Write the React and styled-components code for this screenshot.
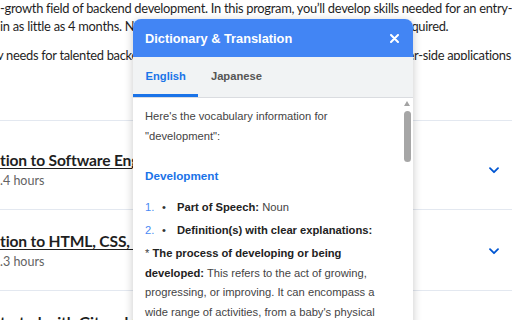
import React from 'react';
import styled, { createGlobalStyle } from 'styled-components';

const Global = createGlobalStyle`
  html, body { margin: 0; padding: 0; background: #fff; }
  body { width: 512px; height: 320px; overflow: hidden; }
`;

const Page = styled.div`
  position: relative;
  width: 512px;
  height: 320px;
  overflow: hidden;
  background: #fff;
  font-family: Lato, "Liberation Sans", sans-serif;
  color: #1f1f1f;
`;

const Para = styled.p`
  margin: ${p => (p.$first ? '-1px 0 0' : '11px 0 0')};
  font-size: 12.9px;
  letter-spacing: -0.29px;
  line-height: 18px;
  white-space: nowrap;
  height: ${p => (p.$clip ? '14px' : 'auto')};
  overflow: hidden;
  text-indent: ${p => p.$indent || '0px'};
`;

const Line = styled.span`
  display: block;
`;

const Modules = styled.div`
  margin-top: 60px;
  padding-top: 8px;
  border-top: 1px solid #e3e8f0;
`;

const Module = styled.div`
  display: flex;
  align-items: center;
  justify-content: space-between;
  padding: 20px 13px 18px 0;
  & + & { border-top: 1px solid #e3e8f0; }
`;

const ModuleText = styled.div`
  display: flex;
  flex-direction: column;
  white-space: nowrap;
`;

const ModuleTitle = styled.span`
  font-size: 15.6px;
  letter-spacing: -0.15px;
  line-height: 22px;
  font-weight: 700;
  text-decoration: underline;
  text-underline-offset: 2px;
  color: #1f1f1f;
`;

const ModuleMeta = styled.span`
  font-size: 12.5px;
  line-height: 20px;
  color: #636363;
`;

const Chevron = () => (
  <svg width="10" height="7" viewBox="0 0 10 7" fill="none">
    <path d="M1 1.2 L5 5.2 L9 1.2" stroke="#0056d2" strokeWidth="1.8" strokeLinecap="round" strokeLinejoin="round" />
  </svg>
);

const Popup = styled.div`
  position: absolute;
  left: 133px;
  top: 19px;
  width: 280px;
  height: 330px;
  display: flex;
  flex-direction: column;
  background: #fff;
  border-radius: 8px 8px 0 0;
  overflow: hidden;
  box-shadow: 0 2px 10px rgba(0, 0, 0, 0.22);
  font-family: "Liberation Sans", Arial, sans-serif;
`;

const Header = styled.div`
  height: 38px;
  flex: none;
  display: flex;
  align-items: center;
  justify-content: space-between;
  padding: 0 14px 0 12px;
  background: #4285f4;
  color: #fff;
`;

const Title = styled.span`
  font-size: 12.8px;
  font-weight: 700;
`;

const CloseIcon = () => (
  <svg width="9" height="9" viewBox="0 0 9 9">
    <path d="M1 1 L8 8 M8 1 L1 8" stroke="#fff" strokeWidth="2" strokeLinecap="round" />
  </svg>
);

const Tabs = styled.div`
  height: 40px;
  flex: none;
  display: flex;
  background: #f1f3f4;
  border-bottom: 1px solid #dadce0;
`;

const Tab = styled.div`
  display: flex;
  align-items: center;
  padding: 1px 12.5px 0;
  font-size: 11.2px;
  font-weight: 700;
  color: ${p => (p.$active ? '#1a73e8' : '#555')};
  border-bottom: 3px solid ${p => (p.$active ? '#1a73e8' : 'transparent')};
`;

const Body = styled.div`
  flex: 1;
  display: flex;
  min-height: 0;
`;

const Content = styled.div`
  flex: 1;
  padding: 9px 12px 0;
  font-size: 11.2px;
  line-height: 19.5px;
  color: #444;
  white-space: nowrap;
`;

const Text = styled.p`
  margin: ${p => p.$mt || '0'} 0 0;
`;

const Heading = styled.h3`
  margin: 20px 0 0;
  font-size: 11.7px;
  line-height: 19.5px;
  font-weight: 700;
  color: #1a73e8;
`;

const List = styled.ol`
  list-style: none;
  margin: 12.5px 0 0;
  padding: 0;
  display: flex;
  flex-direction: column;
  gap: 3.5px;
`;

const Item = styled.li`
  display: flex;
`;

const Num = styled.span`
  width: 17px;
  color: #4a8af4;
`;

const Bullet = styled.span`
  width: 15px;
  color: #333;
`;

const Strong = styled.b`
  color: #222;
  font-weight: 700;
`;

const Scrollbar = styled.div`
  width: 12px;
  flex: none;
  display: flex;
  flex-direction: column;
  align-items: center;
  padding-top: 3px;
`;

const Arrow = styled.div`
  width: 0;
  height: 0;
  border-left: 3px solid transparent;
  border-right: 3px solid transparent;
  border-bottom: 5px solid #a3a3a3;
`;

const Thumb = styled.div`
  margin-top: 5px;
  width: 7px;
  height: 51px;
  border-radius: 4px;
  background: #a6a6a6;
`;

export default function App() {
  return (
    <Page>
      <Global />
      <Para $first>
        <Line>-growth field of backend development. In this program, you’ll develop skills needed for an entry-</Line>
        <Line>in as little as 4 months. No prior programming experience or formal degree required.</Line>
      </Para>
      <Para $clip $indent="-3px">
        <Line>y needs for talented backend developers who can build, test, and deploy server-side applications</Line>
      </Para>
      <Modules>
        <Module>
          <ModuleText>
            <ModuleTitle>tion to Software Engineering</ModuleTitle>
            <ModuleMeta>.4 hours</ModuleMeta>
          </ModuleText>
          <Chevron />
        </Module>
        <Module>
          <ModuleText>
            <ModuleTitle>tion to HTML, CSS, &amp; JavaScript</ModuleTitle>
            <ModuleMeta>.3 hours</ModuleMeta>
          </ModuleText>
          <Chevron />
        </Module>
        <Module>
          <ModuleText>
            <ModuleTitle>tarted with Git and GitHub</ModuleTitle>
            <ModuleMeta>5 hours</ModuleMeta>
          </ModuleText>
          <Chevron />
        </Module>
      </Modules>

      <Popup>
        <Header>
          <Title>Dictionary &amp; Translation</Title>
          <CloseIcon />
        </Header>
        <Tabs>
          <Tab $active>English</Tab>
          <Tab>Japanese</Tab>
        </Tabs>
        <Body>
          <Content>
            <Text>Here's the vocabulary information for<br />"development":</Text>
            <Heading>Development</Heading>
            <List>
              <Item><Num>1.</Num><Bullet>•</Bullet><span><Strong>Part of Speech:</Strong> Noun</span></Item>
              <Item><Num>2.</Num><Bullet>•</Bullet><span><Strong>Definition(s) with clear explanations:</Strong></span></Item>
            </List>
            <Text $mt="3.5px">
              * <Strong>The process of developing or being<br />developed:</Strong> This refers to the act of growing,<br />
              progressing, or improving. It can encompass a<br />wide range of activities, from a baby's physical
            </Text>
          </Content>
          <Scrollbar>
            <Arrow />
            <Thumb />
          </Scrollbar>
        </Body>
      </Popup>
    </Page>
  );
}
